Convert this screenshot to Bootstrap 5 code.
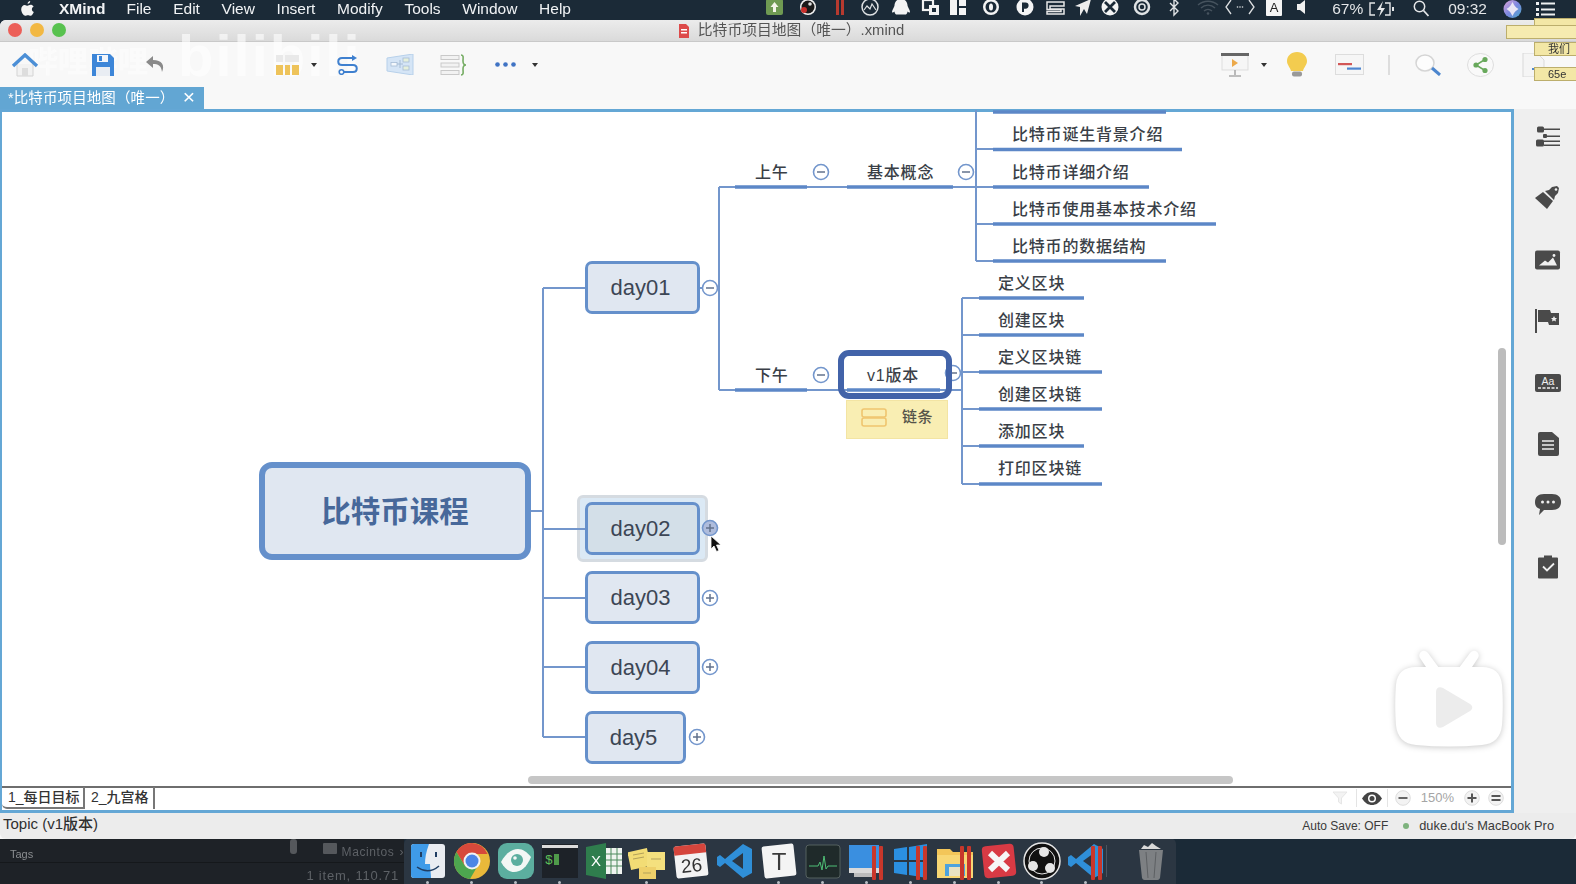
<!DOCTYPE html>
<html lang="zh">
<head>
    <meta charset="UTF-8">
    <title>XMind</title>
    <link href="https://cdn.jsdelivr.net/npm/bootstrap@5.3.0/dist/css/bootstrap.min.css" rel="stylesheet">
    <style>
        html, body { height: 100%; }
        body {
            width: 1576px; height: 884px; overflow: hidden; position: relative;
            background: #1b2a37; color: #333;
            font-family: "Liberation Sans", "Noto Sans CJK SC", sans-serif;
            filter: blur(.4px);
        }
        svg { display: block; flex: none; }

        /* mac menu bar */
        .menubar { height: 20px; color: #f1f3f5; font-size: 15.5px; line-height: 17px; padding: 0 0 3px 21px; }
        .menubar .apple-ic { margin-right: 25px; }
        .menubar .app-name { font-weight: 700; margin-right: 21px; }
        .menu-items { gap: 21.700px; }
        .tray-left { margin-left: auto; margin-right: 0; }
        .tray-txt { font-size: 15.5px; color: #e4e6e8; }
        .tray-bat { margin: 0 18px 0 5px; }
        .tray-time { margin: 0 16px 0 19px; }
        .tray-list { margin: 0 20px 0 14px; }

        /* window */
        .app-win { height: 819px; background: #f8f8f8; border-radius: 6px 6px 0 0; overflow: hidden; position: relative; }
        .title-bar {
            height: 22px; background: linear-gradient(#ececec, #dadada); border-bottom: 1px solid #c9c9c9;
            font-size: 14.8px; line-height: 21px; color: #555;
        }
        .lights { left: 8px; top: 3px; gap: 8px; }
        .lights i { width: 14px; height: 14px; border-radius: 50%; display: block; }
        .light-r { background: #ec5f58; }
        .light-y { background: #f2b843; }
        .light-g { background: #58c24f; }
        .title-file { margin-left: 6px; }
        .tool-bar { height: 45px; padding-left: 11px; background: transparent; position: relative; z-index: 1; }
        .tab-row { height: 22px; background: #f8f8f8; position: relative; z-index: 1; }
        .doc-tab {
            width: 204px; height: 22px; background: #62a6d3; color: #fff; font-size: 14.5px;
            line-height: 22px; padding-left: 8px; justify-content: space-between;
        }
        .doc-tab span { letter-spacing: .1px; }
        .doc-tab b { font-weight: 400; font-size: 21px; line-height: 20px; margin-right: 9px; }
        .ti-save { margin-left: 52px; }
        .ti-undo { margin-left: 30px; }
        .ti-grid { margin-left: 110px; }
        .ti-drop { margin-left: 11px; }
        .ti-flow { margin-left: 18px; }
        .ti-bound { margin-left: 26px; }
        .ti-sum { margin-left: 26px; }
        .ti-dots { margin-left: 27px; }
        .ti-drop2 { margin-left: 16px; }
        .ti-pres { margin-left: auto; }
        .ti-drop3 { margin-left: 12px; }
        .ti-bulb { margin-left: 20px; }
        .ti-card { margin-left: 28px; }
        .ti-sep { margin-left: 24px; width: 2px; height: 20px; background: #ddd; }
        .ti-find { margin-left: 25px; }
        .ti-share { margin-left: 25px; }
        .ti-exp { margin-left: 28px; margin-right: 30px; }

        /* faint video watermark behind the toolbar icons */
        .wm-a, .wm-b { position: absolute; color: #fff; white-space: nowrap; pointer-events: none; font-weight: 700; }
        .wm-a { left: 178px; top: 6px; font-size: 58px; line-height: 60px; opacity: .6; letter-spacing: 2px; }
        .wm-b { left: 28px; top: 26px; font-size: 30px; line-height: 32px; opacity: .5; }

        /* editor + side panel */
        .work-row { height: 704px; position: relative; z-index: 1; }
        .editor { width: 1514px; border: 3px solid #64a7d5; border-left-width: 2px; background: #fff; }
        .canvas-area { flex: 1; }
        .side-panel { width: 62px; background: #efefef; padding-top: 15px; padding-left: 21px; gap: 35.4px; }
        .side-panel svg { width: 26px; height: 26px; }
        .map-lines { position: absolute; left: -2px; top: -112px; pointer-events: none; }
        .map-label { position: absolute; height: 22px; line-height: 22px; font-size: 16px; font-weight: 500; letter-spacing: .8px; color: #3a3f47; white-space: nowrap; padding-top: 1px; }
        .map-node {
            position: absolute; display: flex; align-items: center; justify-content: center;
            border: 3px solid #6590cb; border-radius: 7px; background: #e0e7f1;
            font-size: 22px; color: #3c4655; padding: 0 4px 0 0;
        }
        .map-root { border-width: 6px; border-radius: 13px; color: #47689a; font-size: 29.5px; font-weight: 700; padding: 3px 0 0; }
        .map-sel { background: #d3dfe8; }
        .map-halo { position: absolute; background: #dbe9f5; border: 3px solid #d5dbe1; border-radius: 6px; }
        .map-focus { position: absolute; border: 6px solid #4263a9; border-radius: 11px; }
        .map-note { position: absolute; background: #f9eeb3; border: 1px solid #f3e4a3; color: #55544a; font-size: 15px; font-weight: 500; padding-bottom: 4px; }
        .map-note span { margin-left: 55px; letter-spacing: .5px; }
        .note-ic { position: absolute; left: 14px; top: 7px; }
        .map-cursor { position: absolute; }
        .vbar { position: absolute; left: 1496px; top: 236px; width: 8px; height: 197px; border-radius: 4px; background: #bcbcbc; }
        .hbar { position: absolute; left: 526px; top: 664px; width: 705px; height: 8px; border-radius: 4px; background: #c6c6c6; }
        .play-logo { position: absolute; left: 1392px; top: 538px; filter: drop-shadow(0 1px 3px rgba(0,0,0,.22)); }

        .sheet-strip { height: 24px; border-top: 2px solid #6e6e6e; font-size: 14px; font-weight: 500; color: #333; background: #fff; padding-bottom: 2px; }
        .sheet-tab { padding: 0 5px; line-height: 20px; height: 22px; border-right: 2px solid #777; white-space: nowrap; }
        .sheet-tab:first-child { width: 83px; border-bottom: 2px solid #777; border-radius: 0 0 0 5px; padding-left: 6px; }
        .sheet-tab:nth-child(2) { width: 70px; padding-left: 6px; }
        .st-funnel { margin-left: auto; }
        .st-sep { width: 1px; height: 18px; background: #e4e4e4; }
        .st-s1 { margin-left: 8px; }
        .st-eye { margin-left: 5px; }
        .st-s2 { margin-left: 5px; }
        .st-minus { margin-left: 7px; }
        .st-zoom { margin-left: 10px; font-size: 13px; color: #a5a5a5; font-weight: 400; }
        .st-plus { margin-left: 10px; }
        .st-eq { margin-left: 8px; margin-right: 7px; }

        .status-bar { height: 26px; background: #ececec; border-radius: 0 0 6px 6px; padding-left: 3px; font-size: 15px; font-weight: 500; color: #2f2f2f; position: relative; z-index: 1; }
        .status-topic { margin-bottom: 4px; }
        .status-right { margin-left: auto; font-size: 12px; font-weight: 400; color: #3a3a3a; margin-right: 22px; }
        .status-host { font-size: 12.8px; }
        .status-dot { width: 6px; height: 6px; border-radius: 50%; background: #7db27d; margin: 0 10px 0 15px; }

        /* desktop + dock */
        .desk-row { height: 45px; }
        .finder-bit { width: 404px; background: #1e2227; color: #5d6166; font-size: 12px; }
        .fb-top { height: 24px; border-bottom: 1px solid #15181b; }
        .fb-tags { width: 292px; height: 23px; padding-left: 10px; font-size: 11px; line-height: 30px; overflow: hidden; color: #8a8d90; }
        .fb-thumb { width: 7px; height: 15px; background: #55585c; border-radius: 3px; margin: 0 26px 0 0; }
        .fb-mac { gap: 5px; line-height: 20px; padding-top: 3px; letter-spacing: .6px; }
        .fb-bot { text-align: right; padding-right: 5px; padding-top: 3px; font-size: 13px; letter-spacing: .8px; line-height: 20px; }
        .dock {
            width: 772px; height: 46px; margin-top: -1px; padding: 4px 5px 0; gap: 5.9px; position: relative;
            background: #2b3642; border-radius: 6px 6px 0 0;
        }
        .dock-ic { width: 38px; height: 38px; flex: none; }
        .dock-wrap { width: 38px; height: 42px; position: relative; flex: none; }
        .dock-wrap.on::after { content: ""; position: absolute; left: 17px; top: 39px; width: 3px; height: 3px; border-radius: 50%; background: #b9bfc5; }
        .dock-sep { width: 1px; height: 32px; background: #4b5560; margin: 3px 19px 0 -5px; }

        /* yellow stickies lying over the window */
        .sticky { position: absolute; background: #f3e7a6; border: 1px solid #bcae6c; font-size: 11px; color: #333; line-height: 12px; overflow: hidden; white-space: nowrap; z-index: 2; }
        .sticky-a { left: 1534px; top: 18px; width: 50px; height: 9px; }
        .sticky-b { left: 1506px; top: 25px; width: 80px; height: 14px; background: #f6ebb0; }
        .sticky-c { left: 1534px; top: 42px; width: 50px; height: 14px; padding-left: 13px; }
        .sticky-d { left: 1534px; top: 67px; width: 50px; height: 14px; padding-left: 13px; }
    </style>
</head>
<body>

<!-- shared dock shapes -->
<svg width="0" height="0" class="position-absolute">
    <symbol id="vsc" viewBox="0 0 38 38">
        <path d="M27 2 L36 7 V31 L27 36 L9 21 L4 25 L1 23 V15 L4 13 L9 17 Z M27 11 L16 19 L27 27 Z" fill="#2f8fd8" fill-rule="evenodd"/>
    </symbol>
    <symbol id="redbars" viewBox="0 0 38 38">
        <rect x="24" y="4" width="4" height="34" rx="1" fill="#c8372b"/>
        <rect x="31" y="4" width="4" height="34" rx="1" fill="#c8372b"/>
    </symbol>
</svg>

<div class="menubar d-flex align-items-center">
    <svg class="apple-ic" width="13" height="15" viewBox="0 0 13 15"><path d="M9.2 0c.1 1.400-1.100 2.900-2.600 2.800C6.500 1.400 7.800.1 9.200 0zM12.800 11c-.6 1.500-1.900 3.800-3.200 3.800-1 0-1.400-.6-2.600-.6-1.300 0-1.700.6-2.700.6C2.600 14.800.2 11.500.2 8.300c0-2.700 1.800-4.400 3.500-4.400 1.200 0 2.100.8 2.800.8.700 0 1.800-.9 3.100-.9 1.100 0 2.300.6 3 1.700-2.500 1.500-2.100 4.500.2 5.500z" fill="#f4f4f4"/></svg>
    <span class="app-name">XMind</span>
    <div class="menu-items d-flex">
        <span>File</span><span>Edit</span><span>View</span><span>Insert</span><span>Modify</span><span>Tools</span><span>Window</span><span>Help</span>
    </div>
    <svg class="tray-left" width="566" height="19" viewBox="768 0 566 19">
        <rect x="768" y="0" width="17" height="16" rx="2" fill="#6f9a52"/><path d="M776.500 3l4 5h-2.500v5h-3v-5h-2.500z" fill="#f4f4e8"/>
        <circle cx="810" cy="8" r="8" fill="#f1f1f1"/><circle cx="810" cy="8" r="6.500" fill="#1a1a1a"/><circle cx="806" cy="11" r="3" fill="#c8302c"/><circle cx="812" cy="5" r="1.800" fill="#ddd"/>
        <rect x="838" y="0" width="3" height="16" fill="#b73a2f"/><rect x="843" y="0" width="3" height="16" fill="#b73a2f"/>
        <circle cx="872" cy="8" r="8" fill="none" stroke="#dfe2e4" stroke-width="1.500"/><path d="M866 11l3-4 3 3 2-5 4 6" fill="none" stroke="#dfe2e4" stroke-width="1.200"/>
        <path d="M903 0c4.500 0 6.500 3.500 6.500 6.500 0 1.500 2.500 4 2.500 6.500 0 1-1.500.5-2.500-.5 0 1.500-1 2.500-1.500 3h-10c-.5-.5-1.500-1.500-1.500-3-1 1-2.500 1.500-2.500.5 0-2.500 2.500-5 2.500-6.500C896.500 3.500 898.500 0 903 0z" fill="#f4f4f4"/>
        <rect x="925" y="1" width="10" height="10" fill="none" stroke="#f2f2f2" stroke-width="2.200"/><rect x="931" y="6" width="10" height="10" fill="#f2f2f2"/><rect x="934" y="9" width="4" height="4" fill="#1b2a37"/>
        <rect x="952" y="0" width="7" height="16" fill="#f4f4f4"/><rect x="961" y="0" width="7" height="7" fill="#f4f4f4"/><rect x="961" y="9" width="7" height="7" fill="#f4f4f4"/>
        <circle cx="993" cy="8" r="8" fill="#f4f4f4"/><circle cx="993" cy="8" r="5.500" fill="#1b2a37"/><ellipse cx="993" cy="8" rx="2" ry="3.500" fill="#f4f4f4"/>
        <circle cx="1027" cy="8" r="8.500" fill="#f4f4f4"/><path d="M1024 13V3.500h3.500a3 3 0 010 6.200H1026V13z" fill="#1b2a37"/>
        <path d="M1049 3h17v4h-14v3h14v5h-17v-2.500h14v-2h-14z" fill="none" stroke="#e8e8e8" stroke-width="1.500"/>
        <path d="M1093 0l-4 15-3-5-4 7v-9l-5-1z" fill="#ededed"/>
        <circle cx="1112" cy="8" r="8.500" fill="#f4f4f4"/><path d="M1107 3l10 10m0-10l-10 10" stroke="#1b2a37" stroke-width="2.800"/>
        <circle cx="1144" cy="8" r="7" fill="none" stroke="#dfe2e4" stroke-width="2.500"/><circle cx="1144" cy="8" r="3" fill="none" stroke="#dfe2e4" stroke-width="1.500"/>
        <path d="M1172 4l8 8-4 4V0l4 4-8 8" fill="none" stroke="#e0e3e5" stroke-width="1.400"/>
        <path d="M1200 6a15 15 0 0120 0M1203 9a10 10 0 0114 0M1206 12a6 6 0 018 0" fill="none" stroke="#46535e" stroke-width="1.400"/><circle cx="1210" cy="14.500" r="1.300" fill="#46535e"/>
        <path d="M1233 1l-5 7 5 7M1251 1l5 7-5 7" fill="none" stroke="#dcdfe1" stroke-width="1.300"/><circle cx="1239.500" cy="8" r=".8" fill="#dcdfe1"/><circle cx="1242" cy="8" r=".8" fill="#dcdfe1"/><circle cx="1244.500" cy="8" r=".8" fill="#dcdfe1"/>
        <rect x="1268" y="0" width="16" height="17" rx="1" fill="#f4f4f4"/><text x="1276" y="13" text-anchor="middle" font-size="13" fill="#222" font-family="Liberation Sans">A</text>
        <path d="M1299 5h3l5-4v14l-5-4h-3z" fill="#f0f0f0"/>
    </svg>
    <span class="tray-txt">67%</span>
    <svg class="tray-bat" width="27" height="18" viewBox="0 0 27 18"><path d="M7 3H2v12h5M17 3h5v12h-5" fill="none" stroke="#e4e6e8" stroke-width="1.400"/><path d="M15 1l-6 9h4l-2 7 6-9h-4z" fill="#e4e6e8"/><rect x="24" y="7" width="2" height="4" fill="#e4e6e8"/></svg>
    <svg width="16" height="17" viewBox="0 0 16 17"><circle cx="6.500" cy="6.500" r="5.200" fill="none" stroke="#e4e6e8" stroke-width="1.500"/><path d="M10.500 10.500l5 5.500" stroke="#e4e6e8" stroke-width="1.800"/></svg>
    <span class="tray-txt tray-time">09:32</span>
    <svg width="19" height="18" viewBox="0 0 19 18"><defs><linearGradient id="siri" x1="0" y1="0" x2="1" y2="1"><stop offset="0" stop-color="#e3a6d9"/><stop offset=".5" stop-color="#7d88e0"/><stop offset="1" stop-color="#4aa7c9"/></linearGradient></defs><circle cx="9.500" cy="9" r="9" fill="url(#siri)"/><path d="M9.500 2c2 4 3 5 6 7-3 2-4 3-6 7-2-4-3-5-6-7 3-2 4-3 6-7z" fill="#e9e6f5"/></svg>
    <svg class="tray-list" width="20" height="16" viewBox="0 0 20 16"><g fill="#eef0f1"><rect x="0" y="1" width="3" height="3"/><rect x="0" y="7" width="3" height="3"/><rect x="0" y="12" width="3" height="3"/><rect x="5" y="1.500" width="14" height="2"/><rect x="5" y="7.500" width="14" height="2"/><rect x="5" y="12.500" width="14" height="2"/></g></svg>
</div>

<div class="app-win d-flex flex-column">
    <div class="title-bar position-relative d-flex justify-content-center align-items-center">
        <div class="lights position-absolute d-flex">
            <i class="light-r"></i><i class="light-y"></i><i class="light-g"></i>
        </div>
        <svg class="title-file" width="12" height="14" viewBox="0 0 12 14"><path d="M1 0h7l3 3v11H1z" fill="#dd4b4b"/><rect x="3" y="5" width="6" height="1.500" fill="#fff"/><rect x="3" y="8" width="6" height="1.500" fill="#fff"/></svg>
        <span class="ms-2">比特币项目地图（唯一）.xmind</span>
    </div>

    <div class="wm-a">bilibili</div>
    <div class="wm-b">哔哩哔哩</div>

    <div class="tool-bar d-flex align-items-center">
        <svg width="28" height="24" viewBox="0 0 28 24"><path d="M6 11v12h16V11" fill="#f2f2f2" stroke="#d4d4d4"/><rect x="11" y="15" width="6" height="8" fill="#ddd"/><path d="M2 13L14 2l12 11" fill="none" stroke="#4c8fd6" stroke-width="3.400"/></svg>
        <svg class="ti-save" width="24" height="22" viewBox="0 0 24 22"><path d="M1 0h18l4 4v18H1z" fill="#3d86d8"/><rect x="6" y="1" width="11" height="7" fill="#f3f6fb"/><rect x="5" y="13" width="14" height="9" fill="#e9edf3"/><rect x="8" y="2" width="3" height="5" fill="#3d86d8"/></svg>
        <svg class="ti-undo" width="21" height="19" viewBox="0 0 21 19"><path d="M8 1L1 7l7 6V9c5 0 8 1 9 8 3-7 0-12-9-12z" fill="#8a8a8a"/></svg>
        <svg class="ti-grid" width="24" height="20" viewBox="0 0 24 20"><g fill="#e9e9e9"><rect x="0" y="0" width="7" height="7"/><rect x="9" y="0" width="14" height="7"/></g><g fill="#eec35a"><rect x="0" y="10" width="7" height="10"/><rect x="9" y="10" width="5" height="10"/><rect x="16" y="10" width="7" height="10"/></g></svg>
        <svg class="ti-drop" width="6" height="4" viewBox="0 0 6 4"><path d="M0 0h6L3 4z" fill="#333"/></svg>
        <svg class="ti-flow" width="25" height="20" viewBox="0 0 25 20"><path d="M19 3H7c-5 0-5 7 0 7h11c5 0 5 7 0 7H9" fill="none" stroke="#3f80cf" stroke-width="2"/><path d="M17 0l5 3-5 3z" fill="#3f80cf"/><circle cx="6.500" cy="17" r="2.300" fill="#fff" stroke="#3f80cf" stroke-width="1.600"/></svg>
        <svg class="ti-bound" width="28" height="21" viewBox="0 0 28 21"><path d="M1 4L27 0v21L1 17z" fill="#d5e5f6" stroke="#b7d0ea"/><rect x="5" y="8.500" width="6" height="3.500" fill="#f4f8fc" stroke="#a6bcd5" stroke-width=".8"/><rect x="17" y="4" width="6" height="4" fill="#e6f0dc" stroke="#a6bcd5" stroke-width=".8"/><rect x="17" y="12" width="6" height="4" fill="#e6f0dc" stroke="#a6bcd5" stroke-width=".8"/><path d="M11 10h6M14 6v8" stroke="#a6bcd5"/></svg>
        <svg class="ti-sum" width="28" height="22" viewBox="0 0 28 22"><g fill="#f2f2f2" stroke="#c9c9c9"><rect x="1" y="1.500" width="18" height="4"/><rect x="1" y="9" width="18" height="4"/><rect x="1" y="16.500" width="18" height="4"/></g><path d="M21 1c3 0 2 3 2 6s1 4 3 4c-2 0-3 1-3 4s1 6-2 6" fill="none" stroke="#75ac63" stroke-width="1.600"/></svg>
        <svg class="ti-dots" width="21" height="5" viewBox="0 0 21 5"><g fill="#3f73c4"><circle cx="2.500" cy="2.500" r="2.300"/><circle cx="10.500" cy="2.500" r="2.300"/><circle cx="18.500" cy="2.500" r="2.300"/></g></svg>
        <svg class="ti-drop2" width="6" height="4" viewBox="0 0 6 4"><path d="M0 0h6L3 4z" fill="#333"/></svg>

        <svg class="ti-pres" width="28" height="24" viewBox="0 0 28 24"><rect x="1" y="1" width="26" height="16" fill="#f6f6f6" stroke="#ddd"/><rect x="0" y="0" width="28" height="3" fill="#666"/><path d="M11 6l6 4-6 4z" fill="#eca94a"/><path d="M14 17v5M8 23h12" stroke="#aaa" stroke-width="1.600"/></svg>
        <svg class="ti-drop3" width="6" height="4" viewBox="0 0 6 4"><path d="M0 0h6L3 4z" fill="#333"/></svg>
        <svg class="ti-bulb" width="20" height="25" viewBox="0 0 20 25"><path d="M10 0c6 0 10 4 10 9 0 4-3 6-4 10H4C3 15 0 13 0 9c0-5 4-9 10-9z" fill="#f3cc4f"/><rect x="5" y="19.500" width="10" height="5" rx="2" fill="#999"/></svg>
        <svg class="ti-card" width="29" height="21" viewBox="0 0 29 21"><rect x=".5" y=".5" width="28" height="20" fill="#f6f6f6" stroke="#ddd"/><rect x="3" y="9" width="14" height="2.200" fill="#d25757"/><rect x="12" y="13.500" width="14" height="2.200" fill="#4f86d0"/></svg>
        <div class="ti-sep"></div>
        <svg class="ti-find" width="27" height="22" viewBox="0 0 27 22"><ellipse cx="10" cy="9" rx="9" ry="8" fill="#fdfdfd" stroke="#d5d5d5" stroke-width="1.500"/><path d="M17 14l8 7" stroke="#4c86ce" stroke-width="3"/></svg>
        <svg class="ti-share" width="27" height="24" viewBox="0 0 27 24"><ellipse cx="13.500" cy="12" rx="13" ry="11.500" fill="#f9f9f9" stroke="#ddd"/><g fill="#69a95c"><circle cx="18" cy="6.500" r="2.600"/><circle cx="9" cy="12" r="2.600"/><circle cx="18" cy="17.500" r="2.600"/></g><path d="M18 6.500L9 12l9 5.500" fill="none" stroke="#69a95c" stroke-width="1.500"/></svg>
        <svg class="ti-exp" width="24" height="24" viewBox="0 0 24 24"><path d="M1 0h14l7 7v17H1z" fill="#f5f5f5" stroke="#d9d9d9"/><path d="M10 16h11" stroke="#4c86ce" stroke-width="2"/></svg>
    </div>

    <div class="tab-row">
        <div class="doc-tab d-flex">
            <span>*比特币项目地图（唯一）</span><b>×</b>
        </div>
    </div>

    <div class="work-row d-flex">
        <div class="editor d-flex flex-column">
            <div class="canvas-area position-relative" id="canvas">
                <svg class="map-lines" id="mapLines" width="1512" height="884" viewBox="0 0 1512 884"></svg>
                <div class="vbar"></div>
                <div class="hbar"></div>
                <svg class="play-logo" width="110" height="106" viewBox="0 0 110 106">
                    <path d="M34 20L26 8a4.500 4.500 0 018-5L45 18zM76 20l8-12a4.500 4.500 0 00-8-5L65 18z" fill="#fff"/>
                    <path d="M22 17h66c12 0 19 6 20 18 1 12 1 28 0 40-1 12-8 19-20 20-22 2-44 2-66 0C10 94 3 87 2 75 1 63 1 47 2 35 3 23 10 17 22 17z" fill="#fff"/>
                    <path d="M42 42c0-4 3-6 7-4l27 16c3 2 3 5 0 7L49 77c-4 2-7 0-7-4z" fill="#ececec"/>
                </svg>
            </div>
            <div class="sheet-strip d-flex align-items-center">
                <div class="sheet-tab">1_每日目标</div>
                <div class="sheet-tab">2_九宫格</div>
                <svg class="st-funnel" width="16" height="16" viewBox="0 0 16 16"><path d="M1 2h14l-5.500 6v6l-3-2V8z" fill="#f3f3f3" stroke="#e6e6e6"/></svg>
                <div class="st-sep st-s1"></div>
                <svg class="st-eye" width="20" height="13" viewBox="0 0 20 13"><path d="M0 6.500C3 2 6 0 10 0s7 2 10 6.500C17 11 14 13 10 13S3 11 0 6.500z" fill="#444"/><circle cx="10" cy="6.500" r="4" fill="#fff"/><circle cx="10" cy="6.500" r="2.500" fill="#444"/></svg>
                <div class="st-sep st-s2"></div>
                <svg class="st-minus" width="16" height="16" viewBox="0 0 16 16"><circle cx="8" cy="8" r="7.300" fill="#f3f3f3" stroke="#ddd"/><rect x="3.500" y="7" width="9" height="2" fill="#666"/></svg>
                <span class="st-zoom">150%</span>
                <svg class="st-plus" width="16" height="16" viewBox="0 0 16 16"><circle cx="8" cy="8" r="7.300" fill="#f3f3f3" stroke="#ddd"/><path d="M3.500 8h9M8 3.500v9" stroke="#555" stroke-width="2"/></svg>
                <svg class="st-eq" width="16" height="16" viewBox="0 0 16 16"><circle cx="8" cy="8" r="7.300" fill="#f3f3f3" stroke="#ddd"/><path d="M3.500 6h9M3.500 10h9" stroke="#555" stroke-width="1.800"/></svg>
            </div>
        </div>
        <div class="side-panel d-flex flex-column">
            <svg viewBox="0 0 26 21"><g fill="#4a4a4a"><rect x="2" y="0" width="7" height="6" rx="1.500"/><rect x="1" y="13" width="8" height="7" rx="1.500"/><rect x="8" y="7.500" width="4" height="4" rx="1"/><rect x="9" y="2" width="16" height="1.500"/><rect x="12" y="9" width="13" height="1.500"/><rect x="9" y="14" width="16" height="1.500"/><rect x="9" y="18" width="16" height="1.500"/></g></svg>
            <svg viewBox="0 0 26 24"><path d="M0 12l8-6 10 9-6 8z" fill="#4a4a4a"/><path d="M10 5l4-1 3-3 5-1 2 2-1 5-3 3-1 4z" fill="#4a4a4a"/><circle cx="21" cy="3.500" r="1.300" fill="#efefef"/></svg>
            <svg viewBox="0 0 26 19"><rect width="25" height="19" rx="2" fill="#4a4a4a"/><path d="M4 15l6-5 3 2 5-5 4 8z" fill="#efefef"/><circle cx="19" cy="5" r="1.400" fill="#efefef"/></svg>
            <svg viewBox="0 0 26 24"><rect x="0" y="0" width="2" height="24" fill="#4a4a4a"/><path d="M3 1h12l1 3h8v12H14l-1-3H3z" fill="#4a4a4a"/><path d="M19 7l1 2h2l-1.500 1.500.5 2-2-1-2 1 .5-2L16 9h2z" fill="#efefef"/></svg>
            <svg viewBox="0 0 26 18"><rect width="26" height="18" rx="2" fill="#4a4a4a"/><text x="13" y="10.500" text-anchor="middle" font-size="10.500" fill="#efefef" font-family="Liberation Sans">Aa</text><path d="M3 14h20" stroke="#efefef" stroke-width="1.500" stroke-dasharray="3 1.500"/></svg>
            <svg viewBox="0 0 26 24"><path d="M3 2a2 2 0 012-2h12l7 6v16a2 2 0 01-2 2H5a2 2 0 01-2-2z" fill="#4a4a4a"/><path d="M7 9h12M7 13h12M7 17h12" stroke="#efefef" stroke-width="1.500"/></svg>
            <svg viewBox="0 0 26 22"><path d="M9 0h8c6 0 9 3 9 8s-3 8-9 8H9l-5 5 1-6C2 14 0 12 0 8c0-5 3-8 9-8z" fill="#4a4a4a"/><circle cx="7.500" cy="8" r="1.500" fill="#efefef"/><circle cx="13" cy="8" r="1.500" fill="#efefef"/><circle cx="18.500" cy="8" r="1.500" fill="#efefef"/></svg>
            <svg viewBox="0 0 26 23"><path d="M3 3a1 1 0 011-1h5V0h8v2h5a1 1 0 011 1v19a1 1 0 01-1 1H4a1 1 0 01-1-1z" fill="#4a4a4a"/><path d="M8 11l4 4 7-7" fill="none" stroke="#efefef" stroke-width="1.800"/></svg>
        </div>
    </div>

    <div class="status-bar d-flex align-items-center">
        <span class="status-topic">Topic (v1版本)</span>
        <div class="status-right d-flex align-items-center">
            <span>Auto Save: OFF</span><i class="status-dot"></i><span class="status-host">duke.du's MacBook Pro</span>
        </div>
    </div>
</div>

<div class="desk-row d-flex">
    <div class="finder-bit">
        <div class="fb-top d-flex">
            <div class="fb-tags">Tags</div>
            <div class="fb-thumb"></div>
            <div class="fb-mac d-flex">
                <svg width="14" height="13" viewBox="0 0 14 13"><rect y="1" width="14" height="11" rx="1" fill="#55585c"/></svg>
                <span>Macintos</span><span>›</span>
            </div>
        </div>
        <div class="fb-bot">1 item, 110.71</div>
    </div>
    <div class="dock d-flex" id="dock">
        <div class="dock-wrap on"><svg class="dock-ic" viewBox="0 0 38 38"><rect x="2" y="2" width="34" height="34" rx="3" fill="#e9edf2"/><path d="M5 2h15c-3 8-4 14-4 20h5c0 5 1 10 1 14H5a3 3 0 01-3-3V5a3 3 0 013-3z" fill="#3f9be8"/><path d="M8 25c7 5 15 5 22-1" fill="none" stroke="#1f3e63" stroke-width="1.500"/><rect x="11" y="10" width="2" height="5" fill="#1f3e63"/><rect x="26" y="10" width="2" height="5" fill="#1f3e63"/></svg></div>
        <div class="dock-wrap on"><svg class="dock-ic" viewBox="0 0 38 38"><circle cx="19" cy="19" r="18" fill="#e9b93a"/><path d="M19 1A18 18 0 003.400 10L12 24 19 12h15.600A18 18 0 0019 1z" fill="#d7493b"/><path d="M3.400 10A18 18 0 0017 37l7-12-12-1z" fill="#4da64f"/><circle cx="19" cy="19" r="8.500" fill="#f2f2f2"/><circle cx="19" cy="19" r="6.500" fill="#4b85e5"/></svg></div>
        <div class="dock-wrap on"><svg class="dock-ic" viewBox="0 0 38 38"><rect x="1" y="1" width="36" height="36" rx="9" fill="#5cae9f"/><path d="M4 20c5-9 11-13 17-13 5 0 9 3 13 8-4 10-10 15-17 15-5 0-9-3-13-10z" fill="#f3f7f5"/><circle cx="20" cy="18" r="6" fill="#5cae9f"/><circle cx="18" cy="16" r="1.800" fill="#f3f7f5"/></svg></div>
        <div class="dock-wrap on"><svg class="dock-ic" viewBox="0 0 38 38"><rect x="1" y="2" width="36" height="34" fill="#1d2228"/><rect x="1" y="3" width="36" height="3" fill="#dcdcdc"/><text x="4" y="22" font-size="13" fill="#5fc05a" font-family="Liberation Mono">$</text><rect x="13" y="12" width="5" height="11" fill="#4f9a4a"/></svg></div>
        <div class="dock-wrap"><svg class="dock-ic" viewBox="0 0 38 38"><rect x="16" y="6" width="21" height="26" fill="#f0f4f0"/><path d="M20 6v26M26 6v26M32 6v26M16 12h21M16 18h21M16 24h21" stroke="#4c8a5c"/><path d="M1 5l20-4v36L1 33z" fill="#2f7d4d"/><text x="6" y="24" font-size="15" fill="#fff" font-family="Liberation Sans">X</text></svg></div>
        <div class="dock-wrap on"><svg class="dock-ic" viewBox="0 0 38 38"><rect x="1" y="8" width="20" height="18" fill="#f2dc75" transform="rotate(-12 11 17)"/><rect x="19" y="10" width="18" height="18" fill="#f4e07e"/><rect x="11" y="25" width="17" height="12" fill="#eed06a"/><path d="M5 13l11-2M5 17l11-2M23 17h10M15 31h8" stroke="#b3a15a"/></svg></div>
        <div class="dock-wrap"><svg class="dock-ic" viewBox="0 0 38 38"><g transform="rotate(-6 19 19)"><rect x="3" y="3" width="32" height="32" rx="2" fill="#f3f3f3"/><path d="M3 5a2 2 0 012-2h28a2 2 0 012 2v7H3z" fill="#d5453c"/><text x="19" y="30" text-anchor="middle" font-size="19" fill="#333" font-family="Liberation Sans">26</text></g></svg></div>
        <div class="dock-wrap"><svg class="dock-ic" viewBox="0 0 38 38"><use href="#vsc"/></svg></div>
        <div class="dock-wrap on"><svg class="dock-ic" viewBox="0 0 38 38"><rect x="3" y="3" width="32" height="32" rx="2" fill="#f4f4f4" transform="rotate(-6 19 19)"/><text x="19" y="28" text-anchor="middle" font-size="24" fill="#3b3b3b" font-family="Liberation Sans">T</text></svg></div>
        <div class="dock-wrap on"><svg class="dock-ic" viewBox="0 0 38 38"><rect x="2" y="3" width="34" height="33" rx="3" fill="#1f2a2a" stroke="#55605f"/><path d="M5 24h9l2-4 2 8 2-14 2 13 2-3h9" fill="none" stroke="#4fbf76"/></svg></div>
        <div class="dock-wrap on"><svg class="dock-ic" viewBox="0 0 38 38"><rect x="1" y="3" width="30" height="23" fill="#3a8fe0"/><rect x="1" y="26" width="30" height="5" fill="#d9d9d9"/><rect x="6" y="31" width="20" height="4" fill="#bbb"/><use href="#redbars"/></svg></div>
        <div class="dock-wrap on"><svg class="dock-ic" viewBox="0 0 38 38"><path d="M2 7l13-2v13H2zM17 5l18-3v16H17zM2 20h13v13L2 31zM17 20h18v16l-18-3z" fill="#2b8fe0"/><use href="#redbars"/></svg></div>
        <div class="dock-wrap on"><svg class="dock-ic" viewBox="0 0 38 38"><path d="M1 7h13l3 3h20v26H1z" fill="#f3c659"/><rect x="1" y="13" width="36" height="23" fill="#f8d774"/><rect x="9" y="22" width="20" height="12" fill="#4ea3dd"/><rect x="13" y="25" width="12" height="9" fill="#e9e2c3"/><use href="#redbars"/></svg></div>
        <div class="dock-wrap on"><svg class="dock-ic" viewBox="0 0 38 38"><rect x="3" y="3" width="32" height="32" rx="4" fill="#d83a44" transform="rotate(-6 19 19)"/><path d="M10 11l18 17M28 11L10 28" stroke="#f6f6f6" stroke-width="6"/></svg></div>
        <div class="dock-wrap on"><svg class="dock-ic" viewBox="0 0 38 38"><circle cx="19" cy="19" r="18" fill="#111" stroke="#e6e6e6" stroke-width="1.500"/><circle cx="19" cy="19" r="13" fill="none" stroke="#e6e6e6" stroke-width="1"/><g fill="#e6e6e6"><circle cx="21" cy="10" r="5"/><circle cx="10" cy="24" r="5"/><circle cx="27" cy="26" r="5"/></g><circle cx="19" cy="20" r="5" fill="#111"/></svg></div>
        <div class="dock-wrap on"><svg class="dock-ic" viewBox="0 0 38 38"><use href="#vsc"/><use href="#redbars"/></svg></div>
        <div class="dock-sep"></div>
        <div class="dock-wrap"><svg class="dock-ic" viewBox="0 0 38 38"><path d="M7 8h24l-3 28a3 3 0 01-3 2H13a3 3 0 01-3-2z" fill="#7d8083"/><path d="M9 7l3-4 4 2 4-4 4 3 5 3z" fill="#d9d9d9"/><path d="M14 10l2 26M24 10l-2 26" stroke="#5d6063"/></svg></div>
    </div>
</div>

<div class="sticky sticky-a"></div>
<div class="sticky sticky-b"></div>
<div class="sticky sticky-c">我们</div>
<div class="sticky sticky-d">65e</div>

<script>
    // page coordinates of the mind map; canvas origin is at 2,112
    const ox = 2, oy = 112;
    const thin = '#7396cc', thick = '#5c87c7';

    const connectors = [
        [531, 511, 543, 511], [543, 288, 543, 737],
        [543, 288, 585, 288], [543, 529, 585, 529], [543, 598, 585, 598], [543, 667, 585, 667], [543, 737, 585, 737],
        [700, 288, 719, 288], [719, 187, 719, 390], [719, 187, 735, 187], [719, 390, 735, 390],
        [807, 187, 847, 187], [953, 187, 976, 187], [976, 110, 976, 261],
        [976, 149, 993, 149], [976, 187, 993, 187], [976, 224, 993, 224], [976, 261, 993, 261],
        [807, 390, 847, 390], [940, 390, 962, 390], [962, 298, 962, 484],
        [962, 298, 979, 298], [962, 335, 979, 335], [962, 372, 979, 372], [962, 409, 979, 409], [962, 446, 979, 446], [962, 484, 979, 484]
    ];
    const bars = [
        [735, 807, 187], [847, 953, 187],
        [993, 1166, 112], [993, 1182, 149.500], [993, 1149, 187], [993, 1216, 224], [993, 1166, 261],
        [735, 807, 390], [847, 940, 390],
        [979, 1084, 298], [979, 1084, 335], [979, 1102, 372], [979, 1102, 409], [979, 1084, 446], [979, 1102, 484]
    ];
    const toggles = [
        [710, 288, '-'], [821, 172, '-'], [966, 172, '-'], [821, 375, '-'], [953, 373, '-'],
        [710, 528, '+', true], [710, 598, '+'], [710, 667, '+'], [697, 737, '+']
    ];
    const labels = [
        ['上午', 755, 172], ['基本概念', 867, 172],
        ['比特币诞生背景介绍', 1012, 134], ['比特币详细介绍', 1012, 172], ['比特币使用基本技术介绍', 1012, 209], ['比特币的数据结构', 1012, 246],
        ['下午', 755, 375], ['v1版本', 867, 375],
        ['定义区块', 998, 283], ['创建区块', 998, 320], ['定义区块链', 998, 357], ['创建区块链', 998, 394], ['添加区块', 998, 431], ['打印区块链', 998, 468]
    ];
    const nodes = [
        ['比特币课程', 259, 462, 272, 98, 'map-root'],
        ['day01', 585, 261, 115, 53, ''],
        ['day02', 585, 502, 115, 53, 'map-sel'],
        ['day03', 585, 571, 115, 53, ''],
        ['day04', 585, 641, 115, 53, ''],
        ['day5', 585, 711, 101, 53, '']
    ];

    const canvas = document.getElementById('canvas');
    const svg = document.getElementById('mapLines');
    const place = (el, x, y, w, h) => {
        el.style.left = (x - ox) + 'px';
        el.style.top = (y - oy) + 'px';
        if (w) el.style.width = w + 'px';
        if (h) el.style.height = h + 'px';
        canvas.appendChild(el);
    };
    const box = (cls, x, y, w, h) => {
        const el = document.createElement('div');
        el.className = cls;
        place(el, x, y, w, h);
        return el;
    };

    let out = '';
    connectors.forEach(c => {
        out += `<line x1="${c[0]}" y1="${c[1]}" x2="${c[2]}" y2="${c[3]}" stroke="${thin}" stroke-width="2"/>`;
    });
    bars.forEach(b => {
        out += `<line x1="${b[0]}" y1="${b[2]}" x2="${b[1]}" y2="${b[2]}" stroke="${thick}" stroke-width="3.500"/>`;
    });
    toggles.forEach(t => {
        out += `<circle cx="${t[0]}" cy="${t[1]}" r="7.500" fill="${t[3] ? '#aebcdc' : '#fff'}" stroke="${thin}" stroke-width="1.600"/>`;
        out += `<path d="M${t[0] - 4} ${t[1]}h8" stroke="#62728c" stroke-width="1.500"/>`;
        if (t[2] === '+') out += `<path d="M${t[0]} ${t[1] - 4}v8" stroke="#62728c" stroke-width="1.500"/>`;
    });
    svg.innerHTML = out;

    // halo goes under the connector lines
    const halo = box('map-halo', 577, 495, 131, 67);
    canvas.insertBefore(halo, svg);

    nodes.forEach(n => {
        const el = box('map-node ' + n[5], n[1], n[2], n[3], n[4]);
        el.textContent = n[0];
    });
    labels.forEach(l => {
        const el = box('map-label', l[1], l[2] - 11);
        el.textContent = l[0];
    });

    // selected topic with its note
    box('map-focus', 838, 350, 114, 49);
    const note = box('map-note d-flex align-items-center', 846, 400, 102, 39);
    note.innerHTML = '<svg class="note-ic" width="26" height="19" viewBox="0 0 26 19"><rect x="1" y="1" width="24" height="8" rx="2" fill="none" stroke="#efc56f" stroke-width="1.600"/><rect x="1" y="10" width="24" height="8" rx="2" fill="none" stroke="#efc56f" stroke-width="1.600"/></svg><span>链条</span>';

    // mouse pointer over the day02 toggle
    const tmp = document.createElement('div');
    tmp.innerHTML = '<svg class="map-cursor" width="12" height="18" viewBox="0 0 12 18"><path d="M1 1v13l3-3 2.500 5.500 2.500-1L6.500 10H11z" fill="#111" stroke="#fff" stroke-width=".8"/></svg>';
    place(tmp.firstChild, 710, 535);
</script>
<script src="https://cdn.jsdelivr.net/npm/bootstrap@5.3.0/dist/js/bootstrap.bundle.min.js"></script>
</body>
</html>
